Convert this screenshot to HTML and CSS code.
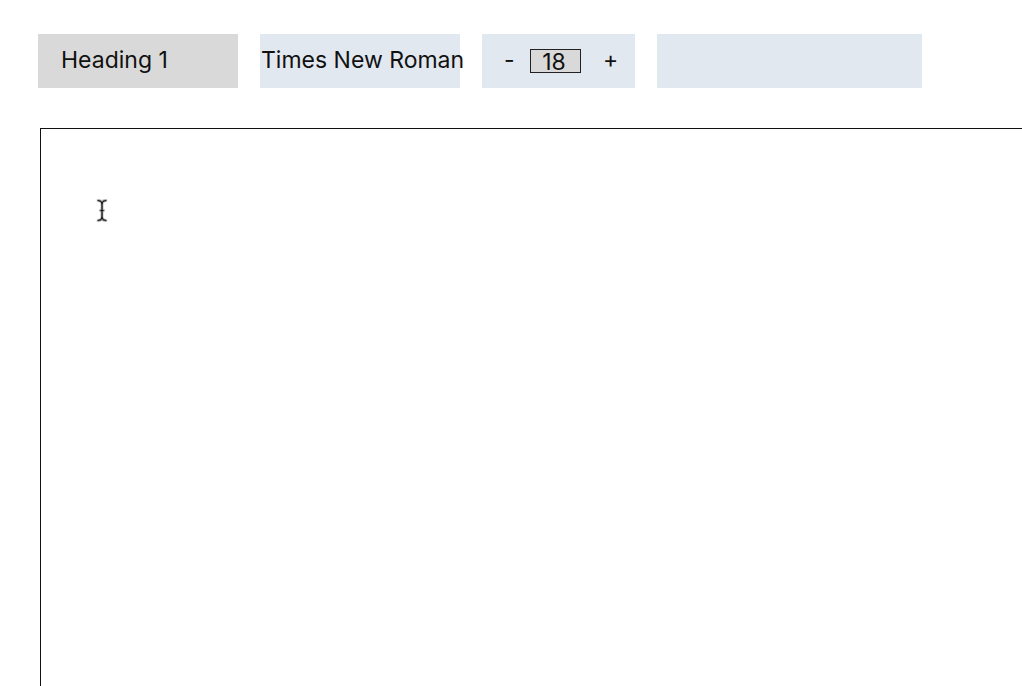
FILE: index.html
```html
<!DOCTYPE html>
<html>
<head>
<meta charset="utf-8">
<link rel="stylesheet" href="styles.css">
</head>
<body>
<div class="toolbar">
  <div class="block-type">Heading 1</div>
  <div class="font-family">Times New Roman</div>
  <div class="font-size">
    <span class="step">-</span>
    <span class="size-input">18</span>
    <span class="step">+</span>
  </div>
  <div class="extra"></div>
</div>
<div class="editor">
  <svg class="cursor" width="12" height="25" viewBox="0 0 12 25">
    <path d="M2 2.5 Q6 2.5 6 6 V19 Q6 22.5 2 22.5 M10 2.5 Q6 2.5 6 6 M10 22.5 Q6 22.5 6 19 M4.5 12.5 H7.5" fill="none" stroke="#ddd" stroke-width="3.4" stroke-linecap="round" stroke-linejoin="round"/>
    <path d="M2 2.5 Q6 2.5 6 6 V19 Q6 22.5 2 22.5 M10 2.5 Q6 2.5 6 6 M10 22.5 Q6 22.5 6 19 M4.5 12.5 H7.5" fill="none" stroke="#888" stroke-width="2.2" stroke-linecap="round" stroke-linejoin="round"/>
    <path d="M2 2.5 Q6 2.5 6 6 V19 Q6 22.5 2 22.5 M10 2.5 Q6 2.5 6 6 M10 22.5 Q6 22.5 6 19 M4.5 12.5 H7.5" fill="none" stroke="#111" stroke-width="1"/>
  </svg>
</div>
</body>
</html>
```
FILE: styles.css
```css
html, body {
  margin: 0;
  padding: 0;
  background: #fff;
  overflow: hidden;
}
body {
  font-family: Inter, "Noto Sans", sans-serif;
  color: #111;
  padding: 34px 0 0 38px;
  height: 686px;
  box-sizing: border-box;
  display: flex;
  flex-direction: column;
}
.toolbar {
  display: flex;
  gap: 22px;
  height: 54px;
  flex: none;
}
.toolbar > div {
  height: 54px;
  display: flex;
  align-items: center;
  font-size: 23px;
  box-sizing: border-box;
}
.block-type {
  width: 200px;
  background: #d9d9d9;
  padding: 0 0 3px 23px;
}
.font-family {
  width: 200px;
  background: #e2e8f0;
  padding: 0 0 3px 1px;
  white-space: nowrap;
}
.font-size {
  width: 153px;
  background: #e2e8f0;
  padding-left: 22px;
}
.step {
  width: 26px;
  margin-bottom: 3px;
}
.size-input {
  width: 51px;
  height: 24px;
  box-sizing: border-box;
  border: 1px solid #222;
  background: #d9d9d9;
  text-align: center;
  line-height: 21px;
  padding: 2px 3px 0 0;
  margin: 0 22px 1px 0;
}
.extra {
  width: 265px;
  background: #e2e8f0;
}
.editor {
  position: relative;
  flex: 1;
  margin: 40px 0 0 2px;
  border-top: 1px solid #111;
  border-left: 1px solid #111;
}
.cursor {
  position: absolute;
  left: 55px;
  top: 69px;
}
```
